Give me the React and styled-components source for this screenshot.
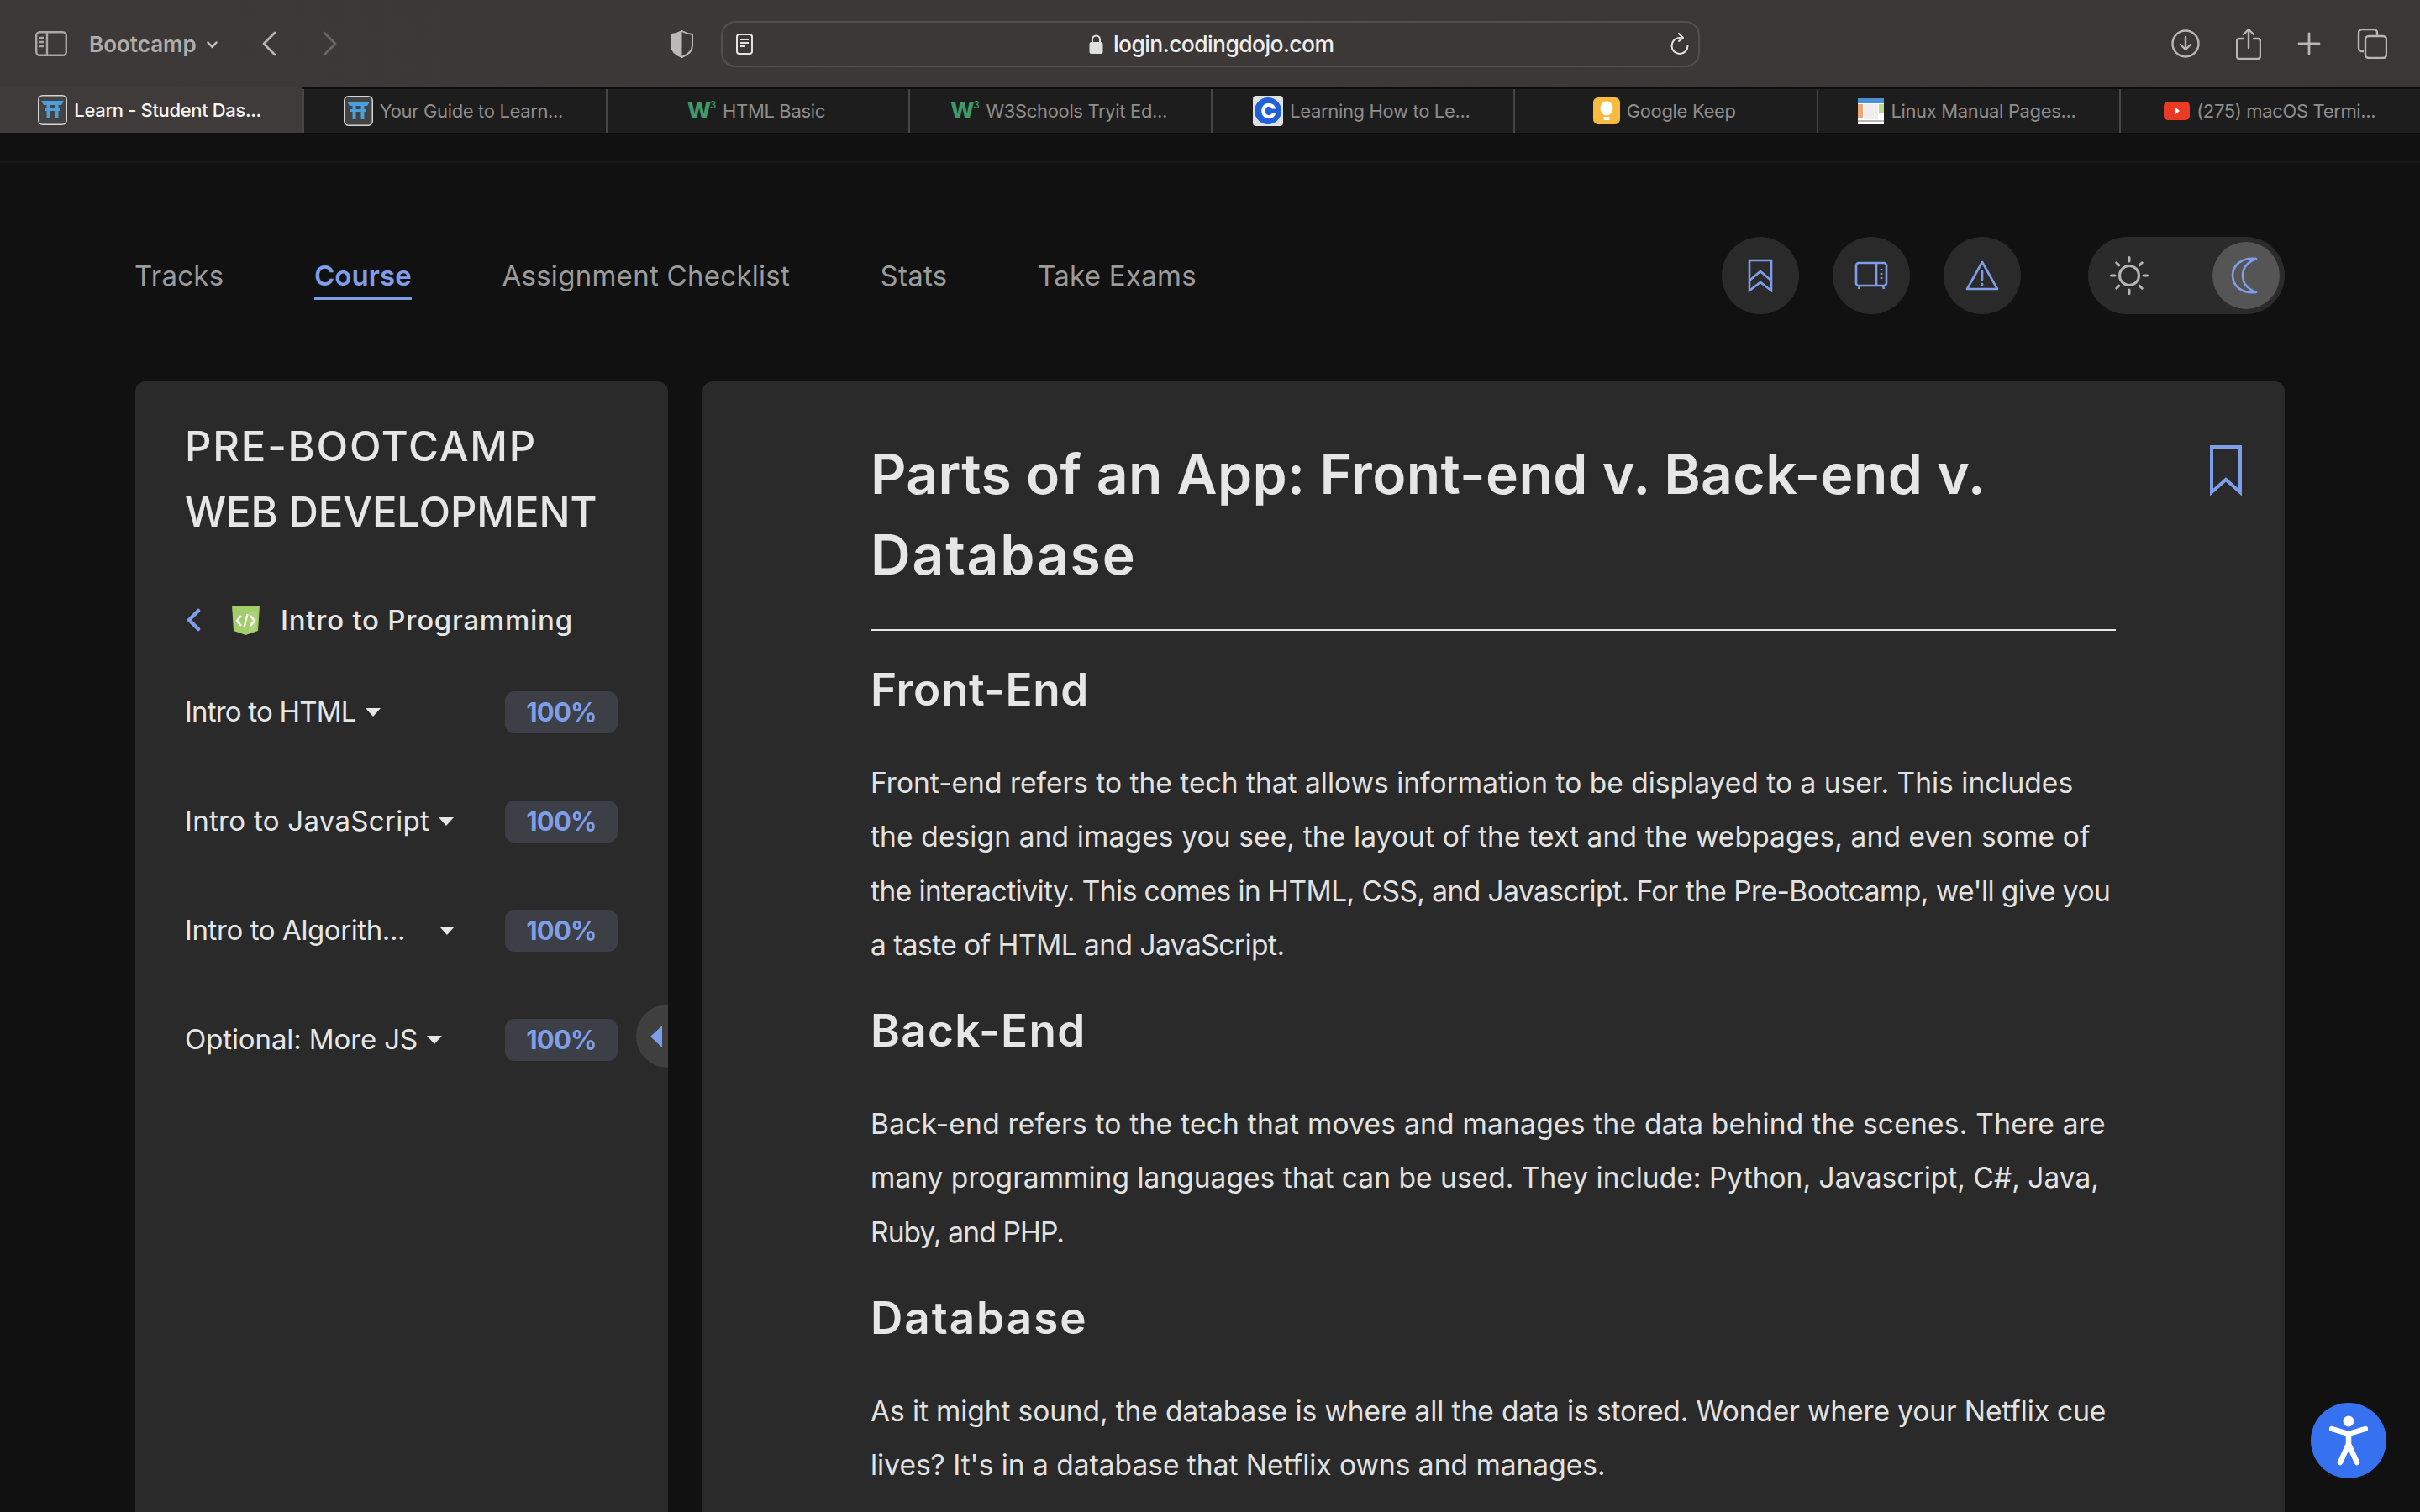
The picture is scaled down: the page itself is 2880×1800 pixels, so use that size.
import styled, { createGlobalStyle } from 'styled-components';

const GlobalStyle = createGlobalStyle`
    html, body {
        margin: 0;
        background: #111111;
    }
    * {
        box-sizing: border-box;
    }
`;

const Screen = styled.div`
    width: 2880px;
    height: 1800px;
    overflow: hidden;
    font-family: Inter, "Liberation Sans", sans-serif;
    background: #111111;
`;

const Toolbar = styled.div`
    height: 104px;
    display: flex;
    align-items: center;
    background: linear-gradient(90deg, #3d3938, #3b3735);
    padding: 0 39px 0 42px;
`;

const Profile = styled.span`
    margin-left: 26px;
    font-size: 26px;
    font-weight: 600;
    color: #b0acaa;
`;

const ToolSlot = styled.span`
    display: flex;
    margin-left: ${props => props.$left}px;
    margin-top: ${props => props.$top || 0}px;
    transform: ${props => props.$mirrored ? 'scaleX(-1)' : 'none'};
`;

const Address = styled.div`
    width: 1165px;
    height: 55px;
    margin-left: 33px;
    padding: 0 11px 0 16px;
    border: 2px solid #524f4c;
    border-radius: 17px;
    display: flex;
    align-items: center;
    justify-content: space-between;
`;

const Url = styled.div`
    display: flex;
    align-items: center;
    gap: 12px;
    font-size: 26.5px;
    letter-spacing: -0.6px;
    font-weight: 500;
    color: #eeeeee;
`;

const RightTools = styled.div`
    margin-left: auto;
    display: flex;
    align-items: center;
    gap: 43px;
`;

const TabBar = styled.div`
    height: 56px;
    display: flex;
    background: #1e1d1d;
    border-top: 2px solid #0e0e0e;
    border-bottom: 2px solid #0e0e0e;
`;

const Tab = styled.div`
    flex: 0 0 360.3px;
    margin-top: ${props => props.$active ? '-2px' : '0'};
    padding-right: 4px;
    display: flex;
    align-items: center;
    justify-content: center;
    gap: 8px;
    font-size: 22px;
    letter-spacing: -0.35px;
    color: ${props => props.$active ? '#f6f6f6' : '#8e8d8c'};
    font-weight: ${props => props.$active ? 500 : 400};
    background: ${props => props.$active ? '#3f3b3a' : 'transparent'};
    border-left: 2px solid #474645;
    &:first-child {
        border-left: none;
    }
`;

const WThree = styled.span`
    display: flex;
    align-items: flex-start;
    font-size: 27px;
    line-height: 24px;
    font-weight: 800;
    color: #3f9a68;
    sup {
        font-size: 12px;
        line-height: 10px;
        font-weight: 500;
        margin-left: -1px;
    }
`;

const Favicon = styled.span`
    width: 36px;
    height: 36px;
    border-radius: 4px;
    background: #e0e0e0;
    display: flex;
    align-items: center;
    justify-content: center;
`;

const CoinLetter = styled.span`
    width: 32px;
    height: 32px;
    border-radius: 50%;
    background: #2160d8;
    color: #ffffff;
    font-size: 25px;
    font-weight: 800;
    text-align: center;
    line-height: 32px;
`;

const Page = styled.div`
    height: 1640px;
    padding-top: 32px;
    position: relative;
`;

const TopRule = styled.div`
    height: 2px;
    background: #1b1b1b;
`;

const Content = styled.div`
    padding: 0 161px 0 160px;
`;

const Nav = styled.nav`
    padding-top: 88px;
    height: 180px;
    display: flex;
    align-items: center;
`;

const NavLinks = styled.div`
    display: flex;
    gap: 107.5px;
    margin-top: 4px;
`;

const NavLink = styled.a`
    font-size: 33px;
    line-height: 50px;
    letter-spacing: ${props => props.$active ? '0.1px' : '0.28px'};
    font-weight: ${props => props.$active ? 600 : 400};
    color: ${props => props.$active ? '#7f9ee9' : '#9b9b9b'};
    border-bottom: 3px solid ${props => props.$active ? '#7f9ee9' : 'transparent'};
    padding-bottom: 1px;
`;

const NavActions = styled.div`
    margin-left: auto;
    display: flex;
    gap: 40px;
`;

const RoundButton = styled.button`
    width: 92px;
    height: 92px;
    padding: 0;
    border: none;
    border-radius: 50%;
    background: #2a2a2a;
    display: flex;
    align-items: center;
    justify-content: center;
`;

const ThemeToggle = styled.div`
    width: 234px;
    height: 92px;
    margin-left: 80px;
    padding: 0 6px 0 26px;
    border-radius: 46px;
    background: #2b2b2b;
    display: flex;
    align-items: center;
    justify-content: space-between;
`;

const ToggleKnob = styled.div`
    width: 80px;
    height: 80px;
    padding-right: 4px;
    border-radius: 50%;
    background: #555555;
    display: flex;
    align-items: center;
    justify-content: center;
`;

const Columns = styled.div`
    margin-top: 80px;
    margin-left: 1px;
    display: flex;
    gap: 41px;
    align-items: flex-start;
`;

const Sidebar = styled.aside`
    flex: 0 0 634px;
    height: 1400px;
    padding: 39px 60px 0 59px;
    background: #2a2a2a;
    border-radius: 12px;
    position: relative;
    overflow: hidden;
    color: #e6e6e6;
`;

const TrackTitle = styled.h2`
    margin: 0;
    font-size: 49px;
    line-height: 78px;
    font-weight: 500;
    color: #e6e6e6;
`;

const ModuleRow = styled.div`
    margin-top: 64px;
    height: 50px;
    padding-left: 1px;
    display: flex;
    align-items: center;
`;

const ModuleName = styled.span`
    margin-left: 25px;
    font-size: 33px;
    font-weight: 500;
    letter-spacing: 0.75px;
`;

const LessonList = styled.div`
    margin-top: 60px;
    display: flex;
    flex-direction: column;
    gap: 80px;
`;

const LessonRow = styled.div`
    height: 50px;
    display: flex;
    align-items: center;
`;

const LessonName = styled.span`
    font-size: 33px;
    padding-bottom: 2px;
    letter-spacing: ${props => props.$tracking}px;
    white-space: nowrap;
    min-width: ${props => props.$minWidth || 0}px;
`;

const Caret = styled.span`
    margin-left: 11px;
    width: 0;
    height: 0;
    border-left: 9px solid transparent;
    border-right: 9px solid transparent;
    border-top: 10px solid #e6e6e6;
`;

const Percent = styled.span`
    margin-left: auto;
    width: 134px;
    height: 50px;
    border-radius: 11px;
    background: #3c3f46;
    color: #7f9ee9;
    font-size: 31px;
    font-weight: 700;
    letter-spacing: -0.8px;
    line-height: 50px;
    text-align: center;
`;

const CollapseHandle = styled.div`
    position: absolute;
    left: 596px;
    top: 742px;
    width: 75px;
    height: 75px;
    border-radius: 50%;
    background: #3f3f3f;
    padding-left: 17px;
    display: flex;
    align-items: center;
`;

const CollapseArrow = styled.span`
    width: 0;
    height: 0;
    border-top: 13px solid transparent;
    border-bottom: 13px solid transparent;
    border-right: 14px solid #7f9ee9;
`;

const Card = styled.main`
    flex: 0 0 1883px;
    height: 1400px;
    display: flex;
    align-items: flex-start;
    padding-left: 200px;
    background: #2a2a2a;
    border-radius: 12px;
    color: #e6e6e6;
`;

const Article = styled.article`
    flex: 0 0 1482px;
    min-width: 0;
    padding-top: 62px;
`;

const Heading = styled.h1`
    margin: 0;
    padding-bottom: 41px;
    border-bottom: 2px solid #e6e6e6;
    font-size: 66px;
    line-height: 96px;
    font-weight: 600;
    color: #e6e6e6;
`;

const SectionTitle = styled.h2`
    margin: 35px 0 0;
    font-size: 53px;
    line-height: 70px;
    font-weight: 600;
    letter-spacing: ${props => props.$tracking}px;
`;

const Paragraph = styled.p`
    margin: 44px 0 0;
    font-size: 33.5px;
    line-height: 64.3px;
    font-weight: 400;
    color: #e2e2e2;
`;

const Line = styled.span`
    display: block;
    white-space: nowrap;
    letter-spacing: ${props => props.$tracking}px;
`;

const SaveMark = styled.div`
    margin: 76px 0 0 112px;
`;

const A11yButton = styled.div`
    position: absolute;
    left: 2750px;
    top: 1510px;
    width: 90px;
    height: 90px;
    border-radius: 50%;
    background: #3672f0;
    display: flex;
    align-items: center;
    justify-content: center;
`;

const SidebarIcon = () => (
    <svg width="38" height="30" viewBox="0 0 38 30" fill="none" stroke="#aaa6a3" strokeWidth="2.4">
        <rect x="1.2" y="1.2" width="35.6" height="27.6" rx="4" />
        <path d="M14 1v28M5 8h5M5 13h5M5 18h5" />
    </svg>
);

const SmallChevron = () => (
    <svg width="13" height="9" viewBox="0 0 13 9" fill="none" stroke="#c4c0be" strokeWidth="2.4" strokeLinecap="round" strokeLinejoin="round">
        <path d="M1.5 1.5l5 5.5 5-5.5" />
    </svg>
);

const BackChevron = ({ color }) => (
    <svg width="17" height="30" viewBox="0 0 17 30" fill="none" stroke={color} strokeWidth="2.8" strokeLinecap="round" strokeLinejoin="round">
        <path d="M15 2L2 15l13 13" />
    </svg>
);

const ShieldIcon = () => (
    <svg width="27" height="33" viewBox="0 0 27 33">
        <path d="M13.5 1C9 3.5 5 4.5 1 5v13c0 7 5 11 12.5 14C21 29 26 25 26 18V5c-4-.5-8-1.500-12.500-4z" fill="none" stroke="#bdb9b7" strokeWidth="2" />
        <path d="M13.500 1C9 3.500 5 4.500 1 5v13c0 7 5 11 12.500 14z" fill="#bdb9b7" />
    </svg>
);

const ReaderIcon = () => (
    <svg width="20" height="25" viewBox="0 0 20 25" fill="none" stroke="#e4e4e4" strokeWidth="2">
        <rect x="1" y="1" width="18" height="23" rx="3" />
        <path d="M5 7h10M5 11h10M5 15h6" />
    </svg>
);

const LockIcon = () => (
    <svg width="17" height="23" viewBox="0 0 17 23">
        <path d="M4 10V6a4.500 4.500 0 0 1 9 0v4" fill="none" stroke="#e0e0e0" strokeWidth="2" />
        <rect x="0.500" y="9" width="16" height="14" rx="2.500" fill="#e0e0e0" />
    </svg>
);

const ReloadIcon = () => (
    <svg width="22" height="26" viewBox="0 0 22 26" fill="none" stroke="#e4e4e4" strokeWidth="2" strokeLinecap="round" strokeLinejoin="round">
        <path d="M11 6a9.500 9.500 0 1 0 9.500 9.500" />
        <path d="M10 1l5 5-5 4" />
    </svg>
);

const DownloadIcon = () => (
    <svg width="34" height="34" viewBox="0 0 34 34" fill="none" stroke="#b9b5b3" strokeWidth="2.4" strokeLinecap="round" strokeLinejoin="round">
        <circle cx="17" cy="17" r="15.500" />
        <path d="M17 9v15M11 18l6 6 6-6" />
    </svg>
);

const ShareIcon = () => (
    <svg width="30" height="38" viewBox="0 0 30 38" fill="none" stroke="#b9b5b3" strokeWidth="2.4" strokeLinecap="round" strokeLinejoin="round">
        <path d="M9 13H4a3 3 0 0 0-3 3v18a3 3 0 0 0 3 3h22a3 3 0 0 0 3-3V16a3 3 0 0 0-3-3h-5" />
        <path d="M15 24V2M9 8l6-6 6 6" />
    </svg>
);

const PlusIcon = () => (
    <svg width="28" height="28" viewBox="0 0 28 28" stroke="#b9b5b3" strokeWidth="2.800" strokeLinecap="round">
        <path d="M14 2v24M2 14h24" />
    </svg>
);

const CopyIcon = () => (
    <svg width="36" height="36" viewBox="0 0 36 36" fill="none" stroke="#b9b5b3" strokeWidth="2.400">
        <path d="M8 27H6a4 4 0 0 1-4-4V5a4 4 0 0 1 4-4h14a4 4 0 0 1 4 4v3" />
        <rect x="10" y="9" width="25" height="26" rx="4" />
    </svg>
);

const ToriiIcon = () => (
    <svg width="35" height="36" viewBox="0 0 35 36">
        <rect x="0.750" y="0.750" width="33.500" height="34.500" rx="5" fill="#434343" stroke="#d4d4d4" strokeWidth="1.500" />
        <path d="M4 7h27l-3 5H7z" fill="#4a9fdc" />
        <path d="M10.500 12h4v16h-4zM20.500 12h4v16h-4zM8 16h19v3H8z" fill="#4a9fdc" />
    </svg>
);

const KeepIcon = () => (
    <svg width="32" height="32" viewBox="0 0 32 32">
        <rect width="32" height="32" rx="6" fill="#f8bb3f" />
        <ellipse cx="16" cy="13" rx="7.500" ry="8.500" fill="#ffffff" />
        <rect x="12.500" y="23" width="7" height="4" fill="#ffffff" />
    </svg>
);

const ManualIcon = () => (
    <svg width="31" height="31" viewBox="0 0 31 31">
        <rect width="31" height="31" fill="#ffffff" />
        <rect width="31" height="6" fill="#4a90d9" />
        <rect y="7" width="6" height="16" fill="#eea878" />
        <rect x="25" y="7" width="6" height="10" fill="#bcd98c" />
        <rect x="7" y="7" width="17" height="18" fill="#eeeeee" />
        <rect y="26" width="31" height="2" fill="#b8b8b8" />
    </svg>
);

const YoutubeIcon = () => (
    <svg width="31" height="22" viewBox="0 0 31 22">
        <rect width="31" height="22" rx="5" fill="#e83a25" />
        <path d="M13 6l6 5-6 5z" fill="#ffffff" />
    </svg>
);

const BookmarkStack = () => (
    <svg width="30" height="40" viewBox="0 0 30 40" fill="none" stroke="#7f9ee9" strokeWidth="2.600">
        <path d="M2 2h26v36L15 28 2 38z" />
        <path d="M2 26L15 15l13 11" />
    </svg>
);

const TvIcon = () => (
    <svg width="40" height="36" viewBox="0 0 40 36" fill="none" stroke="#7f9ee9" strokeWidth="2.600" strokeLinejoin="round">
        <rect x="2" y="3" width="36" height="27" rx="3" />
        <path d="M26 3v27M32 10v2M32 15v2M32 20v2M6 30l-1 4M34 30l1 4" />
    </svg>
);

const WarningIcon = () => (
    <svg width="40" height="38" viewBox="0 0 40 38" fill="none" stroke="#7f9ee9" strokeWidth="2.600" strokeLinejoin="round" strokeLinecap="round">
        <path d="M20 3L38 35H2z" />
        <path d="M20 14v10M20 29v1" />
    </svg>
);

const SunIcon = () => (
    <svg width="46" height="46" viewBox="0 0 46 46" fill="none" stroke="#b5b5b5" strokeWidth="3" strokeLinecap="round">
        <circle cx="23" cy="23" r="11.500" />
        <path d="M23 1.500v4.500M23 40v4.500M1.500 23h4.500M40 23h4.500M7.800 7.800l3 3M35.200 35.200l3 3M7.800 38.200l3-3M35.200 10.800l3-3" />
    </svg>
);

const MoonIcon = () => (
    <svg width="32" height="44" viewBox="0 0 32 44" fill="none" stroke="#7f9ee9" strokeWidth="2.600" strokeLinejoin="round">
        <path d="M30 2C14 0 2 9 2 22s12 22 28 20C20 38 14 31 14 22S20 6 30 2z" />
    </svg>
);

const ModuleShield = () => (
    <svg width="33" height="35" viewBox="0 0 33 35">
        <path d="M0 0h33l-2 30-14.500 5L2 30z" fill="#a3cc6b" />
        <path d="M20 8h10l-1 21-9 3z" fill="#aed47a" />
        <path d="M11 12l-5 6 5 6M22 12l5 6-5 6M18.500 10l-4 16" fill="none" stroke="#ffffff" strokeWidth="2.400" />
    </svg>
);

const BlueBack = () => (
    <svg width="18" height="28" viewBox="0 0 18 28" fill="none" stroke="#7f9ee9" strokeWidth="4.500" strokeLinecap="round" strokeLinejoin="round">
        <path d="M15 3L4 14l11 11" />
    </svg>
);

const LargeBookmark = () => (
    <svg width="38" height="60" viewBox="0 0 38 60" fill="none" stroke="#7f9ee9" strokeWidth="4">
        <path d="M2 2h34v54L19 41 2 56z" />
    </svg>
);

const A11yFigure = () => (
    <svg width="46" height="60" viewBox="0 0 46 60" fill="none" stroke="#ffffff" strokeWidth="6.500" strokeLinecap="round" strokeLinejoin="round">
        <circle cx="23" cy="7" r="6.500" fill="#ffffff" stroke="none" />
        <path d="M3 16l20 6 20-6" />
        <path d="M23 22v12M23 34L13 56M23 34l10 22" />
    </svg>
);

const TABS = [
    { title: 'Learn - Student Das...', icon: <ToriiIcon />, active: true },
    { title: 'Your Guide to Learn...', icon: <ToriiIcon /> },
    { title: 'HTML Basic', icon: <WThree>W<sup>3</sup></WThree> },
    { title: 'W3Schools Tryit Ed...', icon: <WThree>W<sup>3</sup></WThree> },
    { title: 'Learning How to Le...', icon: <Favicon><CoinLetter>C</CoinLetter></Favicon> },
    { title: 'Google Keep', icon: <KeepIcon /> },
    { title: 'Linux Manual Pages...', icon: <ManualIcon /> },
    { title: '(275) macOS Termi...', icon: <YoutubeIcon /> },
];

const LESSONS = [
    { name: 'Intro to HTML', tracking: -0.8 },
    { name: 'Intro to JavaScript', tracking: 0.3 },
    { name: 'Intro to Algorith...', tracking: -0.4, minWidth: 292 },
    { name: 'Optional: More JS', tracking: -0.1 },
];

function TextBlock({ lines }) {
    return (
        <Paragraph>
            {lines.map(([text, tracking]) => <Line key={text} $tracking={tracking}>{text}</Line>)}
        </Paragraph>
    );
}

const FRONT_END = [
    ['Front-end refers to the tech that allows information to be displayed to a user. This includes', 0.02],
    ['the design and images you see, the layout of the text and the webpages, and even some of', 0.13],
    ["the interactivity. This comes in HTML, CSS, and Javascript. For the Pre-Bootcamp, we'll give you", -0.56],
    ['a taste of HTML and JavaScript.', -0.53],
];

const BACK_END = [
    ['Back-end refers to the tech that moves and manages the data behind the scenes. There are', 0.24],
    ['many programming languages that can be used. They include: Python, Javascript, C#, Java,', 0.03],
    ['Ruby, and PHP.', -0.88],
];

const DATABASE = [
    ['As it might sound, the database is where all the data is stored. Wonder where your Netflix cue', -0.11],
    ["lives? It's in a database that Netflix owns and manages.", 0],
];

function App() {
    return (
        <Screen>
            <GlobalStyle />
            <Toolbar>
                <SidebarIcon />
                <Profile>Bootcamp</Profile>
                <ToolSlot $left={12} $top={2}><SmallChevron /></ToolSlot>
                <ToolSlot $left={53}><BackChevron color="#b9b5b3" /></ToolSlot>
                <ToolSlot $left={55} $mirrored><BackChevron color="#6a6664" /></ToolSlot>
                <ToolSlot $left={397}><ShieldIcon /></ToolSlot>
                <Address>
                    <ReaderIcon />
                    <Url><LockIcon />login.codingdojo.com</Url>
                    <ReloadIcon />
                </Address>
                <RightTools>
                    <DownloadIcon />
                    <ShareIcon />
                    <PlusIcon />
                    <CopyIcon />
                </RightTools>
            </Toolbar>
            <TabBar>
                {TABS.map(tab => (
                    <Tab key={tab.title} $active={tab.active}>
                        {tab.icon}
                        {tab.title}
                    </Tab>
                ))}
            </TabBar>
            <Page>
                <TopRule />
                <Content>
                    <Nav>
                        <NavLinks>
                            <NavLink>Tracks</NavLink>
                            <NavLink $active>Course</NavLink>
                            <NavLink>Assignment Checklist</NavLink>
                            <NavLink>Stats</NavLink>
                            <NavLink>Take Exams</NavLink>
                        </NavLinks>
                        <NavActions>
                            <RoundButton><BookmarkStack /></RoundButton>
                            <RoundButton><TvIcon /></RoundButton>
                            <RoundButton><WarningIcon /></RoundButton>
                        </NavActions>
                        <ThemeToggle>
                            <SunIcon />
                            <ToggleKnob><MoonIcon /></ToggleKnob>
                        </ThemeToggle>
                    </Nav>
                    <Columns>
                        <Sidebar>
                            <TrackTitle>
                                <Line $tracking={1.8}>PRE-BOOTCAMP</Line>
                                <Line $tracking={-0.1}>WEB DEVELOPMENT</Line>
                            </TrackTitle>
                            <ModuleRow>
                                <BlueBack />
                                <ToolSlot $left={37}><ModuleShield /></ToolSlot>
                                <ModuleName>Intro to Programming</ModuleName>
                            </ModuleRow>
                            <LessonList>
                                {LESSONS.map(lesson => (
                                    <LessonRow key={lesson.name}>
                                        <LessonName $tracking={lesson.tracking} $minWidth={lesson.minWidth}>{lesson.name}</LessonName>
                                        <Caret />
                                        <Percent>100%</Percent>
                                    </LessonRow>
                                ))}
                            </LessonList>
                            <CollapseHandle><CollapseArrow /></CollapseHandle>
                        </Sidebar>
                        <Card>
                            <Article>
                                <Heading>
                                    <Line $tracking={0.36}>Parts of an App: Front-end v. Back-end v.</Line>
                                    <Line $tracking={1.8}>Database</Line>
                                </Heading>
                                <SectionTitle $tracking={0.6}>Front-End</SectionTitle>
                                <TextBlock lines={FRONT_END} />
                                <SectionTitle $tracking={1.35}>Back-End</SectionTitle>
                                <TextBlock lines={BACK_END} />
                                <SectionTitle $tracking={2}>Database</SectionTitle>
                                <TextBlock lines={DATABASE} />
                            </Article>
                            <SaveMark><LargeBookmark /></SaveMark>
                        </Card>
                    </Columns>
                </Content>
                <A11yButton><A11yFigure /></A11yButton>
            </Page>
        </Screen>
    );
}

export default App;
